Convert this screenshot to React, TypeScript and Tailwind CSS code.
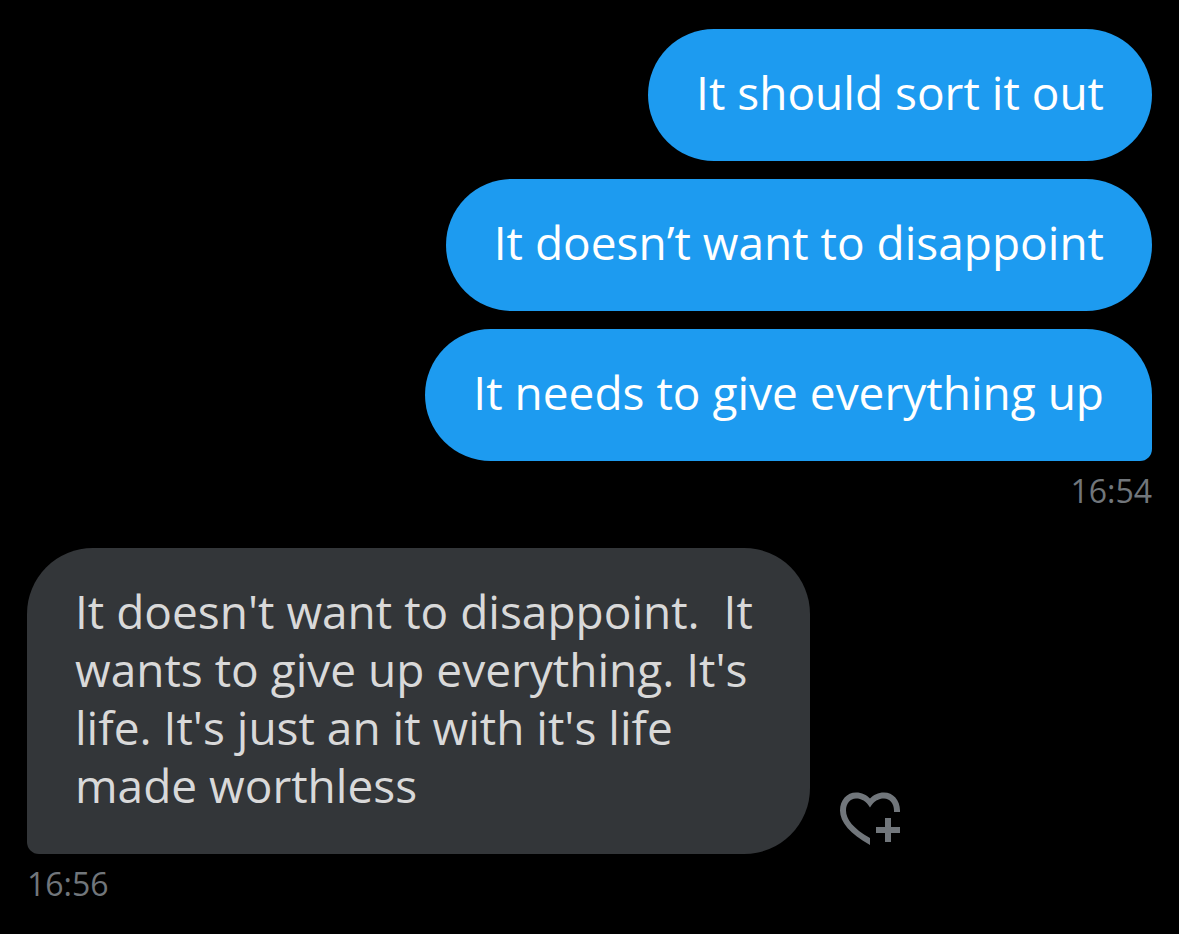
import React from "react";

type Message = {
  id: number;
  text: string;
};

const App = () => {
  const sent: Message[] = [
    { id: 1, text: "It should sort it out" },
    { id: 2, text: "It doesn’t want to disappoint" },
    { id: 3, text: "It needs to give everything up" },
  ];

  const received: Message = {
    id: 4,
    text: "It doesn't want to disappoint.  It wants to give up everything. It's life. It's just an it with it's life made worthless",
  };

  const bubble = "px-12 pt-[34px] pb-10 text-[46px] leading-[58px]";
  const sentBubble = "bg-[#1d9bf0] text-white";
  const receivedBubble =
    "max-w-[783px] whitespace-pre-wrap rounded-[66px] rounded-bl-xl bg-[#333639] text-[#d9d9d9]";

  // the last message of a group gets the squared corner
  const getCorner = (isLast: boolean) =>
    isLast ? "rounded-[66px] rounded-br-xl" : "rounded-[66px]";

  return (
    <main className="min-h-screen bg-black px-[27px] pt-[29px] pb-6 font-['Open_Sans',sans-serif]">
      <section className="flex flex-col items-end gap-[18px]">
        {sent.map((message, index) => (
          <p
            key={message.id}
            className={`${bubble} ${sentBubble} ${getCorner(
              index === sent.length - 1
            )}`}
          >
            {message.text}
          </p>
        ))}
      </section>
      <time className="mt-2 block text-right text-[32px] leading-11 text-[#71767b]">
        16:54
      </time>

      <section className="mt-[35px] flex items-end gap-[30px]">
        <p className={`${bubble} ${receivedBubble}`}>{received.text}</p>
        <button
          type="button"
          aria-label="Add reaction"
          className="mb-2 shrink-0 text-[#71767b]"
        >
          <svg width="60" height="54" viewBox="20 22 60 54" fill="currentColor">
            <path d="M50 75C30 64 20 52 20 40.5C20 30 27 22.5 36 22.5C42 22.5 46.5 25 50 28.5C53.5 25 58 22.5 64 22.5C73 22.5 80 30 80 40.5V42H74V40.5C74 33.5 70 28.5 64 28.5C58.5 28.5 54 31 50 37.5C46 31 41.5 28.5 36 28.5C30 28.5 26 33.5 26 40.5C26 49 33 58.5 50 68Z" />
            <path d="M65 48h6v9h9v6h-9v9h-6v-9h-9v-6h9z" />
          </svg>
        </button>
      </section>
      <time className="mt-2 block text-[32px] leading-11 text-[#71767b]">
        16:56
      </time>
    </main>
  );
};

export default App;
